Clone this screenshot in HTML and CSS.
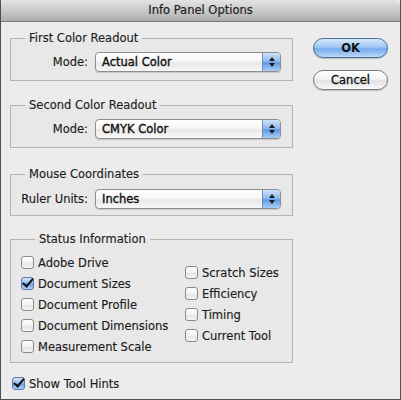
FILE: index.html
```html
<!DOCTYPE html>
<html>
<head>
<meta charset="utf-8">
<link rel="stylesheet" href="styles.css">
</head>
<body>
<div class="window">
  <div class="titlebar">Info Panel Options</div>
  <div class="content">
    <div class="main">
      <div class="groups">
        <fieldset class="group g1">
          <legend>First Color Readout</legend>
          <div class="row">
            <span class="lbl">Mode:</span>
            <div class="popup"><span class="val">Actual Color</span><span class="arrows"><i class="up"></i><i class="down"></i></span></div>
          </div>
        </fieldset>
        <fieldset class="group g2">
          <legend>Second Color Readout</legend>
          <div class="row">
            <span class="lbl">Mode:</span>
            <div class="popup"><span class="val">CMYK Color</span><span class="arrows"><i class="up"></i><i class="down"></i></span></div>
          </div>
        </fieldset>
        <fieldset class="group g3">
          <legend>Mouse Coordinates</legend>
          <div class="row">
            <span class="lbl">Ruler Units:</span>
            <div class="popup"><span class="val">Inches</span><span class="arrows"><i class="up"></i><i class="down"></i></span></div>
          </div>
        </fieldset>
        <fieldset class="group g4">
          <legend>Status Information</legend>
          <div class="cols">
            <div class="col left">
              <div class="check"><span class="box"></span>Adobe Drive</div>
              <div class="check"><span class="box on"></span>Document Sizes</div>
              <div class="check"><span class="box"></span>Document Profile</div>
              <div class="check"><span class="box"></span>Document Dimensions</div>
              <div class="check"><span class="box"></span>Measurement Scale</div>
            </div>
            <div class="col right">
              <div class="check"><span class="box"></span>Scratch Sizes</div>
              <div class="check"><span class="box"></span>Efficiency</div>
              <div class="check"><span class="box"></span>Timing</div>
              <div class="check"><span class="box"></span>Current Tool</div>
            </div>
          </div>
        </fieldset>
      </div>
      <div class="buttons">
        <div class="btn default">OK</div>
        <div class="btn">Cancel</div>
      </div>
    </div>
    <div class="check hints"><span class="box on"></span>Show Tool Hints</div>
  </div>
</div>
</body>
</html>
```

FILE: styles.css
```css
html, body {
  margin: 0;
  padding: 0;
  background: #6a6a6a;
}
body {
  font-family: "DejaVu Sans", "Liberation Sans", sans-serif;
  font-size: 11.5px;
  color: #1a1a1a;
}
.window {
  width: 401px;
  height: 400px;
  box-sizing: border-box;
  border: 1px solid #505050;
  border-top: none;
  background: #ececec;
  display: flex;
  flex-direction: column;
  overflow: hidden;
}
.titlebar {
  height: 22px;
  box-sizing: border-box;
  line-height: 21px;
  text-align: center;
  background: linear-gradient(#e4e4e4, #c9c9c9 50%, #aeaeae);
  border-bottom: 1px solid #777;
  border-radius: 5px 5px 0 0;
  color: #1e1e1e;
  font-size: 11.5px;
  -webkit-text-stroke: 0.2px #1e1e1e;
}
.content {
  flex: 1;
  padding: 8px 0 0 9px;
}
.main {
  display: flex;
}
.groups {
  width: 283px;
  display: flex;
  flex-direction: column;
}
.group {
  margin: 0;
  padding: 6px 11px 8px 0;
  border: 1px solid #b3b3b3;
  background: #e8e8e8;
  min-width: 0;
}
.group legend {
  margin-left: 14px;
  padding: 0 4px;
  line-height: 16px;
  color: #1e1e1e;
  -webkit-text-stroke: 0.15px #1e1e1e;
}
.g2 { margin-top: 16px; }
.g3 { margin-top: 18px; padding-top: 7px; padding-bottom: 6px; }
.g4 { margin-top: 15px; padding: 0 0 5px 10px; }
.row {
  display: flex;
  align-items: center;
}
.lbl {
  width: 77px;
  text-align: right;
  margin-right: 7px;
  -webkit-text-stroke: 0.15px #1a1a1a;
}
.popup {
  flex: 1;
  height: 20px;
  box-sizing: border-box;
  border: 1px solid #8e8e8e;
  border-radius: 4px;
  background: linear-gradient(#ffffff, #f6f6f6 45%, #e9e9e9 55%, #f7f7f7);
  display: flex;
  align-items: center;
  overflow: hidden;
  box-shadow: 0 1px 1px rgba(0,0,0,0.15);
}
.popup .val {
  flex: 1;
  padding-left: 6px;
  color: #111;
  -webkit-text-stroke: 0.35px #111;
}
.arrows {
  width: 17px;
  height: 100%;
  border-left: 1px solid #6d8fba;
  background: linear-gradient(#cfe2f8, #8fbaf0 45%, #5f9ae6 55%, #a9cdf5);
  display: flex;
  flex-direction: column;
  align-items: center;
  justify-content: center;
  gap: 2px;
}
.arrows i {
  width: 0;
  height: 0;
  border-left: 3px solid transparent;
  border-right: 3px solid transparent;
}
.arrows .up { border-bottom: 4px solid #1b1b1b; }
.arrows .down { border-top: 4px solid #1b1b1b; }
.cols {
  display: flex;
  margin-top: 5px;
}
.col.left { width: 164px; }
.col.right { padding-top: 10px; }
.check {
  display: flex;
  align-items: center;
  height: 21px;
  white-space: nowrap;
  -webkit-text-stroke: 0.15px #1a1a1a;
}
.box {
  width: 13px;
  height: 13px;
  box-sizing: border-box;
  border: 1px solid #8a8a8a;
  border-radius: 3px;
  background: linear-gradient(#ffffff, #f2f2f2 50%, #e4e4e4 55%, #f5f5f5);
  margin-right: 4px;
  position: relative;
  flex: none;
  -webkit-text-stroke: 0;
}
.box.on {
  border-color: #5a79a8;
  background: linear-gradient(#d5e6f9, #94bdf0 45%, #6aa1e8 55%, #b4d4f6);
}
.box.on::after {
  content: "";
  position: absolute;
  left: 3px;
  top: -2px;
  width: 4px;
  height: 9px;
  border-right: 2.5px solid #111;
  border-bottom: 2.5px solid #111;
  transform: rotate(40deg);
}
.buttons {
  margin-left: 20px;
  padding-top: 8px;
  display: flex;
  flex-direction: column;
  gap: 12px;
}
.btn {
  width: 75px;
  height: 20px;
  box-sizing: border-box;
  border: 1px solid #7a7a7a;
  border-radius: 10px;
  background: linear-gradient(#ffffff, #f3f3f3 45%, #e2e2e2 55%, #f9f9f9);
  text-align: center;
  line-height: 18px;
  color: #111;
  box-shadow: 0 1px 1px rgba(0,0,0,0.2);
  -webkit-text-stroke: 0.3px #111;
}
.btn.default {
  border-color: #4d6f9e;
  background: linear-gradient(#d8e8fb, #a0c6f3 45%, #76abeb 55%, #b9d8f8);
  font-weight: 600;
  -webkit-text-stroke: 0;
}
.hints {
  margin-top: 10px;
  margin-left: 2px;
}
```
